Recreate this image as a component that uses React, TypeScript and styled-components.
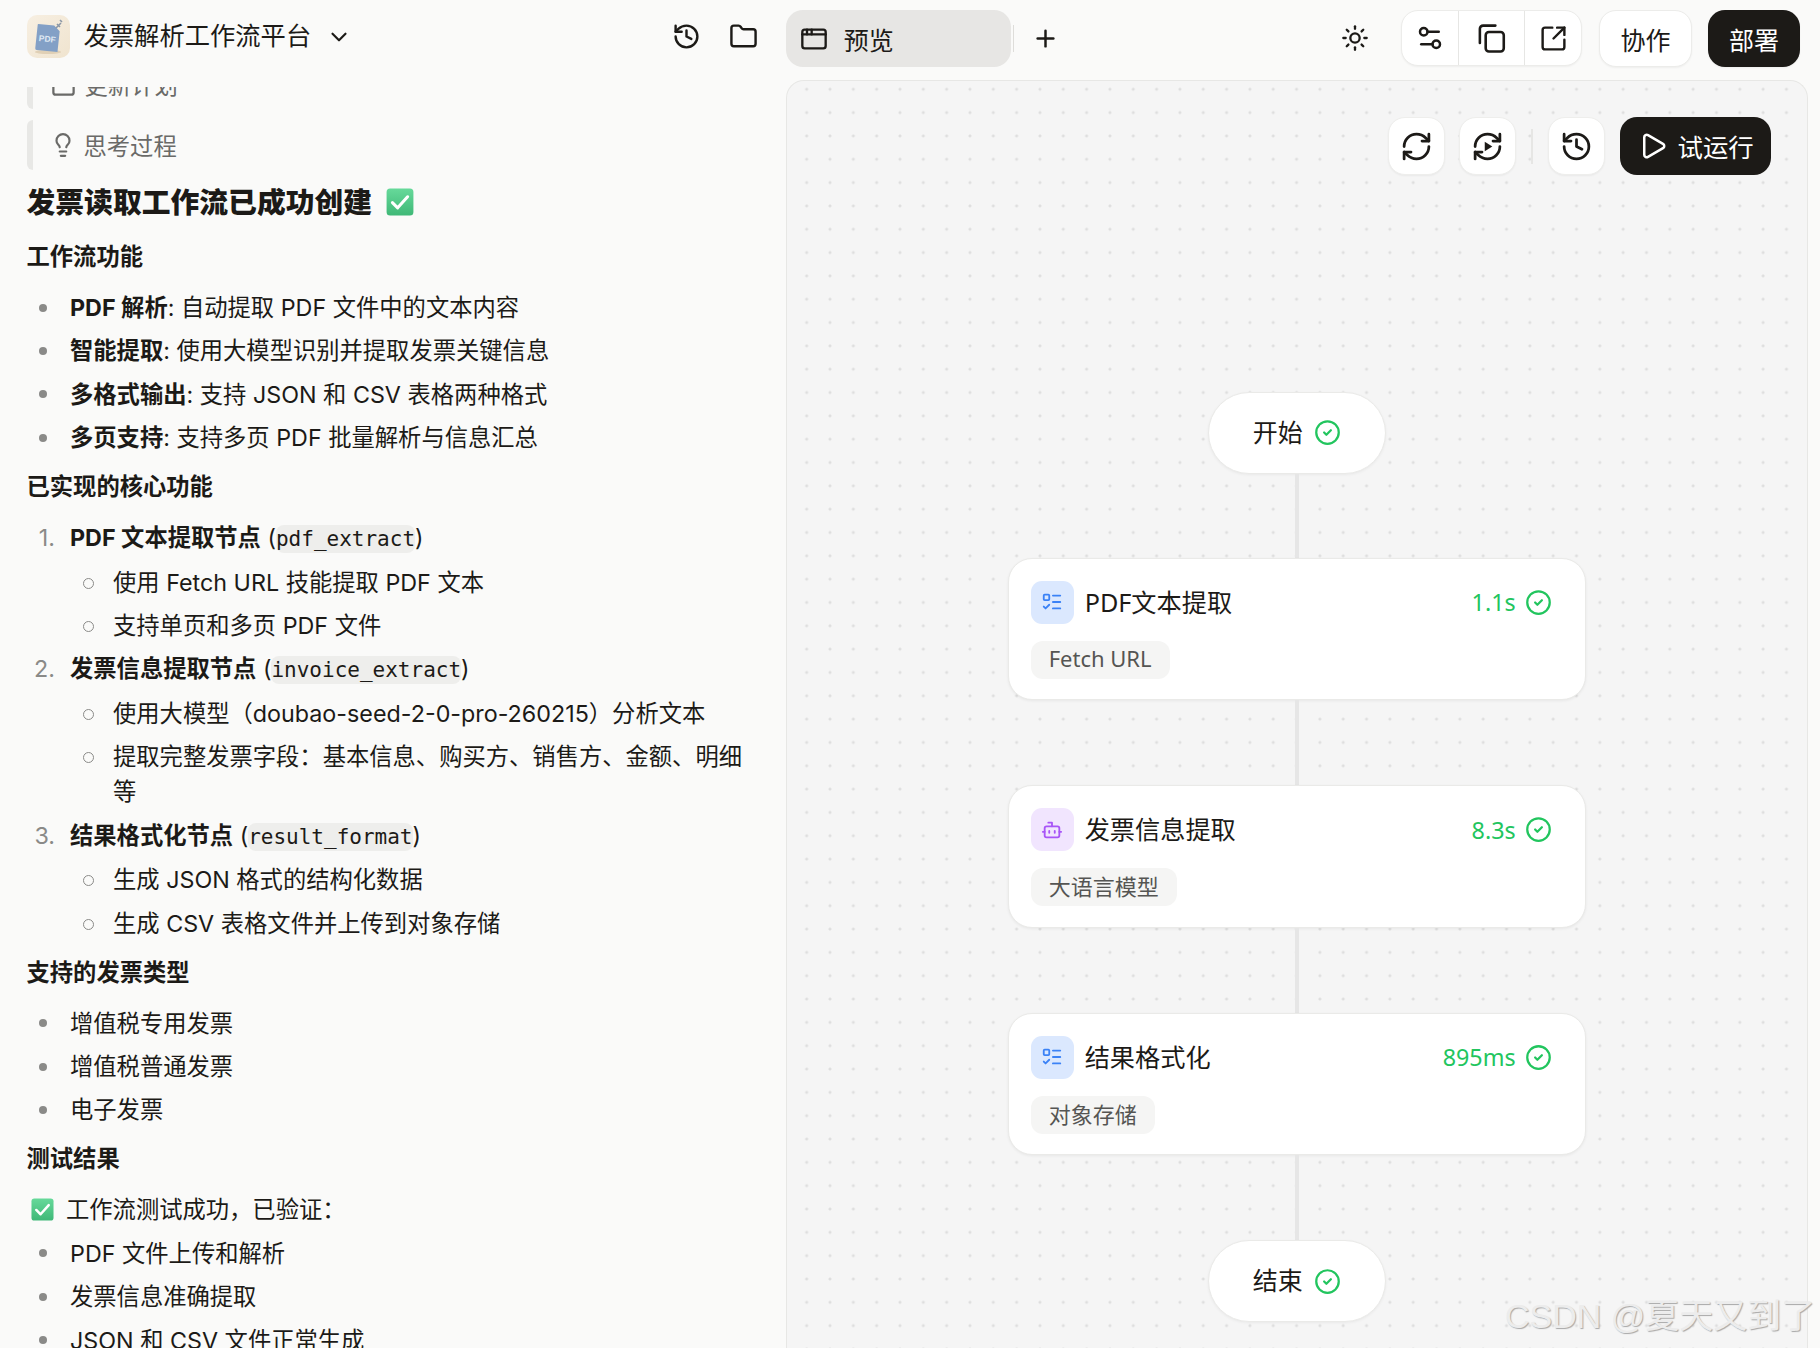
import React from 'react';
import styled, { createGlobalStyle } from 'styled-components';
import {
  AppWindow, Bot, ChevronDown, CircleCheck, Folder, History, Lightbulb, ListTodo, Play, Plus,
  RefreshCw, Settings2, Square, SquareArrowOutUpRight, Sun,
} from 'lucide-react';

const Global = createGlobalStyle`
  html, body { margin: 0; padding: 0; background: #fafaf9; }
  * { box-sizing: border-box; }
`;

const Page = styled.div`
  position: relative;
  width: 1820px;
  height: 1348px;
  overflow: hidden;
  display: grid;
  grid-template-columns: 785.8px 1fr;
  background: #fafaf9;
  color: #1c1a17;
  font-family: "Noto Sans", "Noto Sans CJK SC", sans-serif;
`;

const LeftColumn = styled.section`
  display: flex;
  flex-direction: column;
  min-height: 0;
`;

const RightColumn = styled.section`
  display: flex;
  flex-direction: column;
  min-height: 0;
  padding-right: 12.5px;
`;

const LeftHeader = styled.header`
  flex: none;
  height: 87px;
  padding: 15px 28px 0 26.5px;
  display: flex;
  align-items: flex-start;
`;

const AppIcon = styled.svg`
  width: 43px;
  height: 43px;
  flex: none;
`;

const AppTitle = styled.div`
  margin-left: 14px;
  font-size: 25.3px;
  line-height: 40px;
`;

const Chevron = styled.span`
  display: flex;
  margin: 9px 0 0 15px;
`;

const HeaderIcons = styled.div`
  margin-left: auto;
  padding-top: 7px;
  display: flex;
  align-items: center;
  gap: 28px;
`;

const Scroll = styled.div`
  flex: 1;
  min-height: 0;
  overflow: hidden;
  padding: 0 30px 0 26.5px;
`;

const Thought = styled.div<{ $first?: boolean }>`
  height: 50px;
  margin-top: ${(p) => (p.$first ? '-28px' : '11px')};
  border-left: 6px solid #e8e8e6;
  border-radius: 6px;
  padding-left: 17px;
  display: flex;
  align-items: center;
  gap: 8px;
  font-size: 23.3px;
  color: #6a6a68;
`;

const Heading = styled.h1`
  margin: 13px 0 0;
  font-size: 28.8px;
  line-height: 38px;
  font-weight: 900;
  display: flex;
  align-items: center;
  gap: 14px;
`;

const SubHeading = styled.h2`
  margin: 14px 0 16px;
  font-size: 23.3px;
  line-height: 35px;
  font-weight: 700;
`;

const FirstSub = styled(SubHeading)`
  margin-top: 18px;
`;

const Bullets = styled.ul`
  margin: 0;
  padding: 0 0 0 43.5px;
  list-style: none;
  font-family: "Inter", "Noto Sans CJK SC", sans-serif;
  font-size: 23.3px;
  line-height: 35px;

  & > li { position: relative; margin-top: 8.4px; }
  & > li:first-child { margin-top: 0; }
  & > li::before {
    content: "";
    position: absolute;
    left: -31.3px;
    top: 13.5px;
    width: 8px;
    height: 8px;
    border-radius: 50%;
    background: #8a8a88;
  }
`;

const Numbers = styled(Bullets).attrs({ as: 'ol' })`
  counter-reset: step;

  & > li { counter-increment: step; }
  & > li::before {
    content: counter(step) ".";
    left: auto;
    top: 0;
    right: calc(100% + 15px);
    width: auto;
    height: auto;
    border-radius: 0;
    background: none;
    color: #8a8a88;
  }
`;

const SubBullets = styled.ul`
  margin: 9.5px 0 0;
  padding: 0 0 0 43px;
  list-style: none;

  & > li { position: relative; margin-top: 8.4px; }
  & > li:first-child { margin-top: 0; }
  & > li::before {
    content: "";
    position: absolute;
    left: -30.5px;
    top: 13px;
    width: 9px;
    height: 9px;
    border-radius: 50%;
    border: 1.5px solid #8a8a88;
  }
`;

const Code = styled.code`
  font-family: "DejaVu Sans Mono", monospace;
  font-size: 21px;
  background: #eeeeec;
  border-radius: 8px;
  padding: 2px 0;
  line-height: 24px;
`;

const Paragraph = styled.p`
  margin: 0 0 8.4px;
  padding-left: 4.5px;
  font-family: "Inter", "Noto Sans CJK SC", sans-serif;
  font-size: 23.3px;
  line-height: 35px;
  display: flex;
  align-items: center;
  gap: 12px;
`;

const RightHeader = styled.header`
  flex: none;
  height: 80px;
  padding: 10px 7.5px 0 0;
  display: flex;
  align-items: flex-start;
`;

const PreviewTab = styled.div`
  width: 225px;
  height: 57px;
  border-radius: 17px;
  background: #e7e6e4;
  padding-left: 14px;
  display: flex;
  align-items: center;
  gap: 16px;
  font-size: 25px;
`;

const TabDivider = styled.span`
  width: 1px;
  height: 27px;
  margin: 15px 0 0 2px;
  background: #deddda;
`;

const AddTab = styled.span`
  display: flex;
  margin: 15px 0 0 18px;
`;

const SunSlot = styled.span`
  margin: 14px 32px 0 auto;
  display: flex;
`;

const ActionGroup = styled.div`
  height: 56px;
  display: flex;
  background: #fff;
  border: 1px solid #ececea;
  border-radius: 17px;
  box-shadow: 0 1px 2px rgba(0, 0, 0, 0.05);
  overflow: hidden;
`;

const ActionCell = styled.span<{ $w: number }>`
  width: ${(p) => p.$w}px;
  display: flex;
  align-items: center;
  justify-content: center;

  & + & { border-left: 1px solid #e6e6e4; }
`;

const TextButton = styled.div<{ $dark?: boolean }>`
  width: ${(p) => (p.$dark ? '92px' : '93px')};
  height: 57px;
  margin-left: ${(p) => (p.$dark ? '16px' : '17px')};
  border-radius: 17px;
  background: ${(p) => (p.$dark ? '#1c1a17' : '#fff')};
  color: ${(p) => (p.$dark ? '#fff' : '#1c1a17')};
  border: ${(p) => (p.$dark ? 'none' : '1px solid #ececea')};
  box-shadow: 0 1px 2px rgba(0, 0, 0, 0.05);
  display: flex;
  align-items: center;
  justify-content: center;
  font-size: 25px;
`;

const Canvas = styled.main`
  position: relative;
  flex: 1;
  min-height: 0;
  overflow: hidden;
  border: 1px solid #e7e7e5;
  border-bottom: none;
  border-radius: 18px 18px 0 0;
  background-color: #f5f5f5;
  background-image: radial-gradient(circle, #dedede 1.3px, transparent 1.7px);
  background-size: 23.33px 23.33px;
  background-position: 8px -3.4px;
  display: flex;
  flex-direction: column;
  align-items: center;
  padding-top: 310.5px;
`;

const CanvasTools = styled.div`
  position: absolute;
  top: 36px;
  right: 36px;
  display: flex;
  align-items: center;
  gap: 14.7px;
`;

const ToolButton = styled.span`
  width: 57px;
  height: 58px;
  border-radius: 17px;
  background: #fff;
  border: 1px solid #eeeeec;
  box-shadow: 0 1px 2px rgba(0, 0, 0, 0.05);
  display: flex;
  align-items: center;
  justify-content: center;
`;

const ToolDivider = styled.span`
  width: 2px;
  height: 35px;
  background: #e6e6e4;
`;

const RunButton = styled.div`
  width: 151px;
  height: 58px;
  border-radius: 17px;
  background: #1c1a17;
  color: #fff;
  padding-left: 18px;
  display: flex;
  align-items: center;
  gap: 10px;
  font-size: 25.4px;
`;

const Terminal = styled.div`
  flex: none;
  width: 178px;
  height: 82px;
  border-radius: 41px;
  background: #fff;
  border: 1px solid #eaeae8;
  box-shadow: 0 1px 3px rgba(0, 0, 0, 0.05);
  display: flex;
  align-items: center;
  justify-content: center;
  gap: 11px;
  font-size: 25px;
`;

const TerminalLabel = styled.span`
  padding-bottom: 4px;
`;

const Connector = styled.span<{ $h: number }>`
  flex: none;
  width: 4px;
  height: ${(p) => p.$h}px;
  background: #e6e6e6;
`;

const Card = styled.article`
  flex: none;
  width: 578px;
  height: 142.6px;
  border-radius: 24px;
  background: #fff;
  border: 1px solid #eaeae8;
  box-shadow: 0 1px 3px rgba(0, 0, 0, 0.06);
  padding: 22px 33px 0 22px;
`;

const CardTop = styled.div`
  display: flex;
  align-items: center;
  height: 43px;
`;

const NodeIcon = styled.span<{ $tone: 'blue' | 'purple' }>`
  width: 43px;
  height: 43px;
  flex: none;
  border-radius: 11px;
  background: ${(p) => (p.$tone === 'blue' ? '#dbe8fe' : '#f1e5fe')};
  color: ${(p) => (p.$tone === 'blue' ? '#3b82f6' : '#a855f7')};
  display: flex;
  align-items: center;
  justify-content: center;
`;

const CardTitle = styled.span`
  margin-left: 11px;
  padding-bottom: 3px;
  font-size: 25.2px;
`;

const Duration = styled.span`
  margin-left: auto;
  margin-right: 9px;
  font-size: 23.3px;
  color: #22c55e;
`;

const Tag = styled.span`
  display: inline-flex;
  align-items: center;
  height: 38px;
  margin-top: 17px;
  padding: 0 18px 4px;
  border-radius: 12px;
  background: #f5f5f4;
  color: #555553;
  font-size: 22px;
`;

const Watermark = styled.div`
  position: absolute;
  left: 1505px;
  top: 1296px;
  font-family: "Liberation Sans", "Noto Sans CJK SC", sans-serif;
  font-size: 34px;
  line-height: 40px;
  white-space: nowrap;
  color: #ececec;
  text-shadow: 1px 1px 1px #a8a8a8;
`;

const DoneMark = ({ size }: { size: number }) => (
  <svg width={size} height={size} viewBox="0 0 24 24" style={{ flex: 'none' }}>
    <defs>
      <linearGradient id="doneGrad" x1="0" y1="0" x2="0" y2="1">
        <stop offset="0" stopColor="#66d99a" />
        <stop offset="1" stopColor="#3fb877" />
      </linearGradient>
    </defs>
    <rect x="0.5" y="0.5" width="23" height="23" rx="3" fill="url(#doneGrad)" />
    <path d="M5.5 12.5l4.5 4.5 8.5-9.5" fill="none" stroke="#fff" strokeWidth="2.6" strokeLinecap="round" strokeLinejoin="round" />
  </svg>
);

const CopyIcon = () => (
  <svg width="31" height="31" viewBox="0 0 24 24" fill="none" stroke="currentColor" strokeWidth="2" strokeLinecap="round" strokeLinejoin="round">
    <rect x="7.5" y="7" width="14" height="15" rx="2.5" />
    <path d="M3 15.5V4.5A2.5 2.5 0 0 1 5.5 2H15" />
  </svg>
);

const ReplayIcon = () => (
  <svg width="33" height="33" viewBox="0 0 24 24" fill="none" stroke="currentColor" strokeWidth="2" strokeLinecap="round" strokeLinejoin="round">
    <path d="M3 12a9 9 0 0 1 9-9 9.75 9.75 0 0 1 6.74 2.74L21 8" />
    <path d="M21 3v5h-5" />
    <path d="M21 12a9 9 0 0 1-9 9 9.75 9.75 0 0 1-6.74-2.74L3 16" />
    <path d="M8 16H3v5" />
    <path d="M10 8.5l5.5 3.5-5.5 3.5z" fill="currentColor" stroke="none" />
  </svg>
);

const PdfLogo = () => (
  <AppIcon viewBox="0 0 43 43">
    <defs>
      <linearGradient id="logoBg" x1="0" y1="0" x2="1" y2="1">
        <stop offset="0" stopColor="#f7efe2" />
        <stop offset="1" stopColor="#f0e4cf" />
      </linearGradient>
    </defs>
    <rect width="43" height="43" rx="10" fill="url(#logoBg)" />
    <ellipse cx="21" cy="37" rx="13" ry="2" fill="#e0d0b6" />
    <g transform="rotate(6 21 22)">
      <path d="M10 10h16l6 5v21H11a1.5 1.5 0 0 1-1.5-1.5V11a1 1 0 0 1 .5-1z" fill="#83a0c6" />
      <text x="12" y="27" fontSize="8.5" fontWeight="700" fill="#dfe8f3" fontFamily="Liberation Sans, sans-serif">PDF</text>
    </g>
    <path d="M29 13l5-5M33 5l2 2M30 9l3 3" stroke="#8b97a6" strokeWidth="1.6" fill="none" />
  </AppIcon>
);

const cards = [
  { title: 'PDF文本提取', time: '1.1s', tag: 'Fetch URL', tone: 'blue' as const },
  { title: '发票信息提取', time: '8.3s', tag: '大语言模型', tone: 'purple' as const },
  { title: '结果格式化', time: '895ms', tag: '对象存储', tone: 'blue' as const },
];

const Check = ({ size = 27 }: { size?: number }) => <CircleCheck size={size} color="#22c55e" strokeWidth={2} />;

export default function App() {
  return (
    <Page lang="zh-CN">
      <Global />
      <LeftColumn>
        <LeftHeader>
          <PdfLogo />
          <AppTitle>发票解析工作流平台</AppTitle>
          <Chevron><ChevronDown size={26} strokeWidth={2} /></Chevron>
          <HeaderIcons>
            <History size={29} strokeWidth={2} />
            <Folder size={29} strokeWidth={2} />
          </HeaderIcons>
        </LeftHeader>
        <Scroll>
          <Thought $first>
            <Square size={27} strokeWidth={2} />
            更新计划
          </Thought>
          <Thought>
            <Lightbulb size={26} strokeWidth={2} />
            思考过程
          </Thought>
          <Heading>发票读取工作流已成功创建 <DoneMark size={28} /></Heading>
          <FirstSub>工作流功能</FirstSub>
          <Bullets>
            <li><strong>PDF 解析</strong>: 自动提取 PDF 文件中的文本内容</li>
            <li><strong>智能提取</strong>: 使用大模型识别并提取发票关键信息</li>
            <li><strong>多格式输出</strong>: 支持 JSON 和 CSV 表格两种格式</li>
            <li><strong>多页支持</strong>: 支持多页 PDF 批量解析与信息汇总</li>
          </Bullets>
          <SubHeading>已实现的核心功能</SubHeading>
          <Numbers>
            <li>
              <strong>PDF 文本提取节点</strong> (<Code>pdf_extract</Code>)
              <SubBullets>
                <li>使用 Fetch URL 技能提取 PDF 文本</li>
                <li>支持单页和多页 PDF 文件</li>
              </SubBullets>
            </li>
            <li>
              <strong>发票信息提取节点</strong> (<Code>invoice_extract</Code>)
              <SubBullets>
                <li>使用大模型（doubao-seed-2-0-pro-260215）分析文本</li>
                <li>提取完整发票字段：基本信息、购买方、销售方、金额、明细等</li>
              </SubBullets>
            </li>
            <li>
              <strong>结果格式化节点</strong> (<Code>result_format</Code>)
              <SubBullets>
                <li>生成 JSON 格式的结构化数据</li>
                <li>生成 CSV 表格文件并上传到对象存储</li>
              </SubBullets>
            </li>
          </Numbers>
          <SubHeading>支持的发票类型</SubHeading>
          <Bullets>
            <li>增值税专用发票</li>
            <li>增值税普通发票</li>
            <li>电子发票</li>
          </Bullets>
          <SubHeading>测试结果</SubHeading>
          <Paragraph><DoneMark size={23} />工作流测试成功，已验证：</Paragraph>
          <Bullets>
            <li>PDF 文件上传和解析</li>
            <li>发票信息准确提取</li>
            <li>JSON 和 CSV 文件正常生成</li>
          </Bullets>
        </Scroll>
      </LeftColumn>
      <RightColumn>
        <RightHeader>
          <PreviewTab><AppWindow size={28} strokeWidth={2} />预览</PreviewTab>
          <TabDivider />
          <AddTab><Plus size={27} strokeWidth={2.2} /></AddTab>
          <SunSlot><Sun size={28} strokeWidth={2} /></SunSlot>
          <ActionGroup>
            <ActionCell $w={56}><Settings2 size={30} strokeWidth={2} /></ActionCell>
            <ActionCell $w={66}><CopyIcon /></ActionCell>
            <ActionCell $w={57}><SquareArrowOutUpRight size={29} strokeWidth={2} /></ActionCell>
          </ActionGroup>
          <TextButton>协作</TextButton>
          <TextButton $dark>部署</TextButton>
        </RightHeader>
        <Canvas>
          <CanvasTools>
            <ToolButton><RefreshCw size={33} strokeWidth={2} /></ToolButton>
            <ToolButton><ReplayIcon /></ToolButton>
            <ToolDivider />
            <ToolButton><History size={33} strokeWidth={2} /></ToolButton>
            <RunButton><Play size={30} strokeWidth={2} />试运行</RunButton>
          </CanvasTools>
          <Terminal><TerminalLabel>开始</TerminalLabel><Check /></Terminal>
          <Connector $h={84} />
          {cards.map((c) => (
            <React.Fragment key={c.title}>
              <Card>
                <CardTop>
                  <NodeIcon $tone={c.tone}>
                    {c.tone === 'blue' ? <ListTodo size={22} strokeWidth={2} /> : <Bot size={22} strokeWidth={2} />}
                  </NodeIcon>
                  <CardTitle>{c.title}</CardTitle>
                  <Duration>{c.time}</Duration>
                  <Check />
                </CardTop>
                <Tag>{c.tag}</Tag>
              </Card>
              <Connector $h={85} />
            </React.Fragment>
          ))}
          <Terminal><TerminalLabel>结束</TerminalLabel><Check /></Terminal>
        </Canvas>
      </RightColumn>
      <Watermark>CSDN @夏天又到了</Watermark>
    </Page>
  );
}
